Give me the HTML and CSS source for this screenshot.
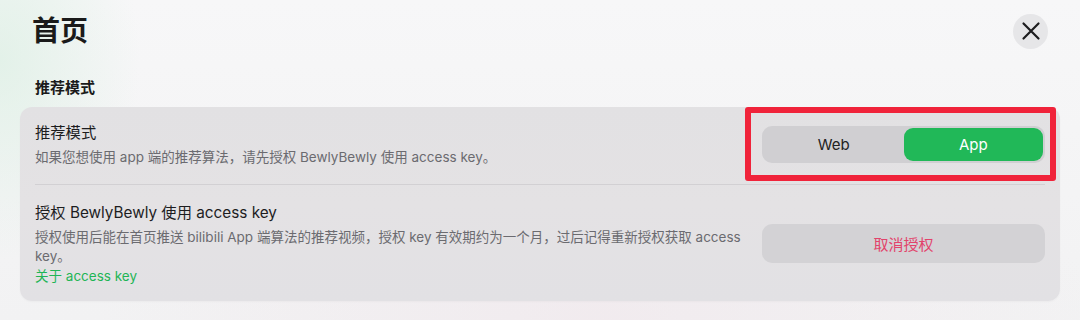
FILE: index.html
```html
<!DOCTYPE html>
<html lang="zh-CN">
<head>
<meta charset="utf-8">
<title>首页</title>
<link rel="stylesheet" href="styles.css">
</head>
<body>
<div class="page">
  <header class="header">
    <h1 class="title">首页</h1>
    <button class="close" aria-label="关闭">
      <svg viewBox="0 0 20 20" width="20" height="20"><path d="M2.5 2.5L17.5 17.5M17.5 2.5L2.5 17.5" stroke="#1d1d1f" stroke-width="2.2" stroke-linecap="round" fill="none"/></svg>
    </button>
  </header>
  <h2 class="section-label">推荐模式</h2>
  <div class="card">
    <div class="row">
      <div class="text">
        <div class="row-title">推荐模式</div>
        <div class="row-desc">如果您想使用 app 端的推荐算法，请先授权 BewlyBewly 使用 access key。</div>
      </div>
      <div class="control">
        <div class="segment">
          <div class="seg-item">Web</div>
          <div class="seg-item active">App</div>
        </div>
        <div class="highlight"></div>
      </div>
    </div>
    <div class="row last">
      <div class="text">
        <div class="row-title">授权 BewlyBewly 使用 access key</div>
        <div class="row-desc">授权使用后能在首页推送 bilibili App 端算法的推荐视频，授权 key 有效期约为一个月，过后记得重新授权获取 access key。</div>
        <a class="link" href="#">关于 access key</a>
      </div>
      <div class="control">
        <button class="revoke">取消授权</button>
      </div>
    </div>
  </div>
</div>
</body>
</html>
```

FILE: styles.css
```css
* { box-sizing: border-box; }
html, body { margin: 0; padding: 0; }
body {
  width: 1080px;
  height: 320px;
  overflow: hidden;
  font-family: "Inter", "Noto Sans CJK SC", sans-serif;
  color: #1d1d1f;
  background:
    radial-gradient(ellipse 140px 200px at 0px 60px, rgba(222, 240, 229, 0.8), rgba(222, 240, 229, 0) 100%),
    radial-gradient(ellipse 500px 200px at 600px 320px, rgba(240, 230, 235, 0.6), rgba(240, 230, 235, 0) 100%),
    linear-gradient(180deg, #f7f7f8 0%, #f2f2f3 100%);
}
.page {
  padding: 13px 20px 0 20px;
}
.header {
  display: flex;
  align-items: center;
  justify-content: space-between;
  height: 36px;
}
.title {
  margin: 0 0 0 12px;
  font-size: 28px;
  line-height: 36px;
  font-weight: 700;
  color: #1a1a1a;
}
.close {
  width: 35px;
  height: 35px;
  margin-right: 12px;
  border: none;
  border-radius: 50%;
  background: #e6e6e8;
  display: flex;
  align-items: center;
  justify-content: center;
  padding: 0;
}
.section-label {
  margin: 28px 0 8px 15px;
  font-size: 15px;
  line-height: 22px;
  font-weight: 700;
  color: #1a1a1a;
}
.card {
  border-radius: 12px;
  background: linear-gradient(180deg, #e2e1e3 0%, #e4e2e4 50%, #e2e1e4 100%);
  padding: 0 15px;
  box-shadow: 0 1px 2px rgba(0,0,0,0.03);
}
.row {
  display: flex;
  align-items: center;
  gap: 17px;
  padding: 15px 0 16px;
  border-bottom: 1px solid #d2d0d3;
}
.row.last {
  border-bottom: none;
  padding: 17px 0 15px;
}
.text {
  flex: 1;
  min-width: 0;
  display: flex;
  flex-direction: column;
}
.row-title {
  font-size: 15.3px;
  line-height: 22px;
  color: #1d1d1f;
}
.row-desc {
  margin-top: 4px;
  font-size: 13.5px;
  line-height: 19.5px;
  color: #6b6b70;
}
.link {
  font-size: 13.5px;
  line-height: 19.5px;
  color: #1fb556;
  text-decoration: none;
}
.control {
  position: relative;
  width: 283px;
  flex: none;
}
.segment {
  display: grid;
  grid-template-columns: 1fr 1fr;
  padding: 2px;
  height: 37px;
  border-radius: 10px;
  background: #d0cfd2;
}
.seg-item {
  display: flex;
  align-items: center;
  justify-content: center;
  font-size: 15px;
  color: #222;
  border-radius: 9px;
}
.seg-item.active {
  background: #21b858;
  color: #fff;
}
.highlight {
  position: absolute;
  left: -17px;
  right: -11px;
  top: -19px;
  bottom: -18px;
  border: 6px solid #f0233a;
  border-radius: 3px;
  pointer-events: none;
}
.revoke {
  width: 100%;
  height: 39px;
  border: none;
  border-radius: 10px;
  background: #d3d2d5;
  color: #e2436b;
  font-family: inherit;
  font-size: 15px;
}
```
